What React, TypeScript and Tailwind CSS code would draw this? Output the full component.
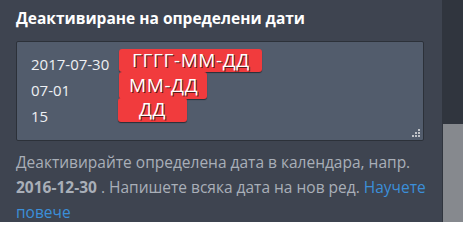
export default function App() {
  return (
    <div className="flex h-[222px] w-[463px] overflow-hidden bg-[#3e4450] font-['Open_Sans',sans-serif]">
      <div className="flex-1 pl-4 pr-[18px]">
        <h2 className="mt-[7px] text-[15.5px] font-bold leading-[22px] text-white">Деактивиране на определени дати</h2>
        <div className="relative mt-3 h-[100px] rounded-[2px] border border-[#2c3139] bg-[#525c6c] pt-[9px] pl-[14px] text-[15px] leading-[26px] text-[#eef0f3]">
          <div>2017-07-30</div>
          <div>07-01</div>
          <div>15</div>
          {/* format hints */}
          <span className="absolute left-[102px] top-[7px] h-[23px] w-[143px] rounded-[3px] bg-[#f13b3d] pl-[13px] text-[19px] leading-[22px] tracking-[0.6px] text-white shadow-[0_1px_1px_rgba(0,0,0,0.5)] [text-shadow:1px_1px_0_#5a1a1a]">ГГГГ-ММ-ДД</span>
          <span className="absolute left-[102px] top-[30px] h-[27px] w-[88px] rounded-[3px] bg-[#f13b3d] pl-[10px] text-[19px] leading-[26px] tracking-[0.6px] text-white shadow-[0_1px_1px_rgba(0,0,0,0.5)] [text-shadow:1px_1px_0_#5a1a1a]">ММ-ДД</span>
          <span className="absolute left-[101px] top-[56px] h-[24px] w-[69px] rounded-[3px] bg-[#f13b3d] pl-[21px] text-[19px] leading-[23px] tracking-[0.6px] text-white shadow-[0_1px_1px_rgba(0,0,0,0.5)] [text-shadow:1px_1px_0_#5a1a1a]">ДД</span>
          {/* resize grip */}
          <div className="absolute bottom-[3px] right-[3px] grid grid-cols-3 gap-[1px]">
            <span className="h-[2px] w-[2px]" />
            <span className="h-[2px] w-[2px]" />
            <span className="h-[2px] w-[2px] bg-[#c0c3c8]" />
            <span className="h-[2px] w-[2px]" />
            <span className="h-[2px] w-[2px] bg-[#c0c3c8]" />
            <span className="h-[2px] w-[2px] bg-[#c0c3c8]" />
            <span className="h-[2px] w-[2px] bg-[#c0c3c8]" />
            <span className="h-[2px] w-[2px] bg-[#c0c3c8]" />
            <span className="h-[2px] w-[2px] bg-[#c0c3c8]" />
          </div>
        </div>
        <p className="mt-[9px] mr-[-8px] text-[15.5px] leading-[25px] text-[#a9afb8]">
          Деактивирайте определена дата в календара, напр. <b>2016-12-30</b> . Напишете всяка дата на нов ред.{' '}
          <a className="text-[#3b8fd9]">Научете повече</a>
        </p>
      </div>
      <div className="flex w-[21px] flex-col bg-[#30353e] pl-[1px]">
        <div className="mt-[124px] h-[98px] bg-[#86898e]" />
      </div>
    </div>
  );
}
